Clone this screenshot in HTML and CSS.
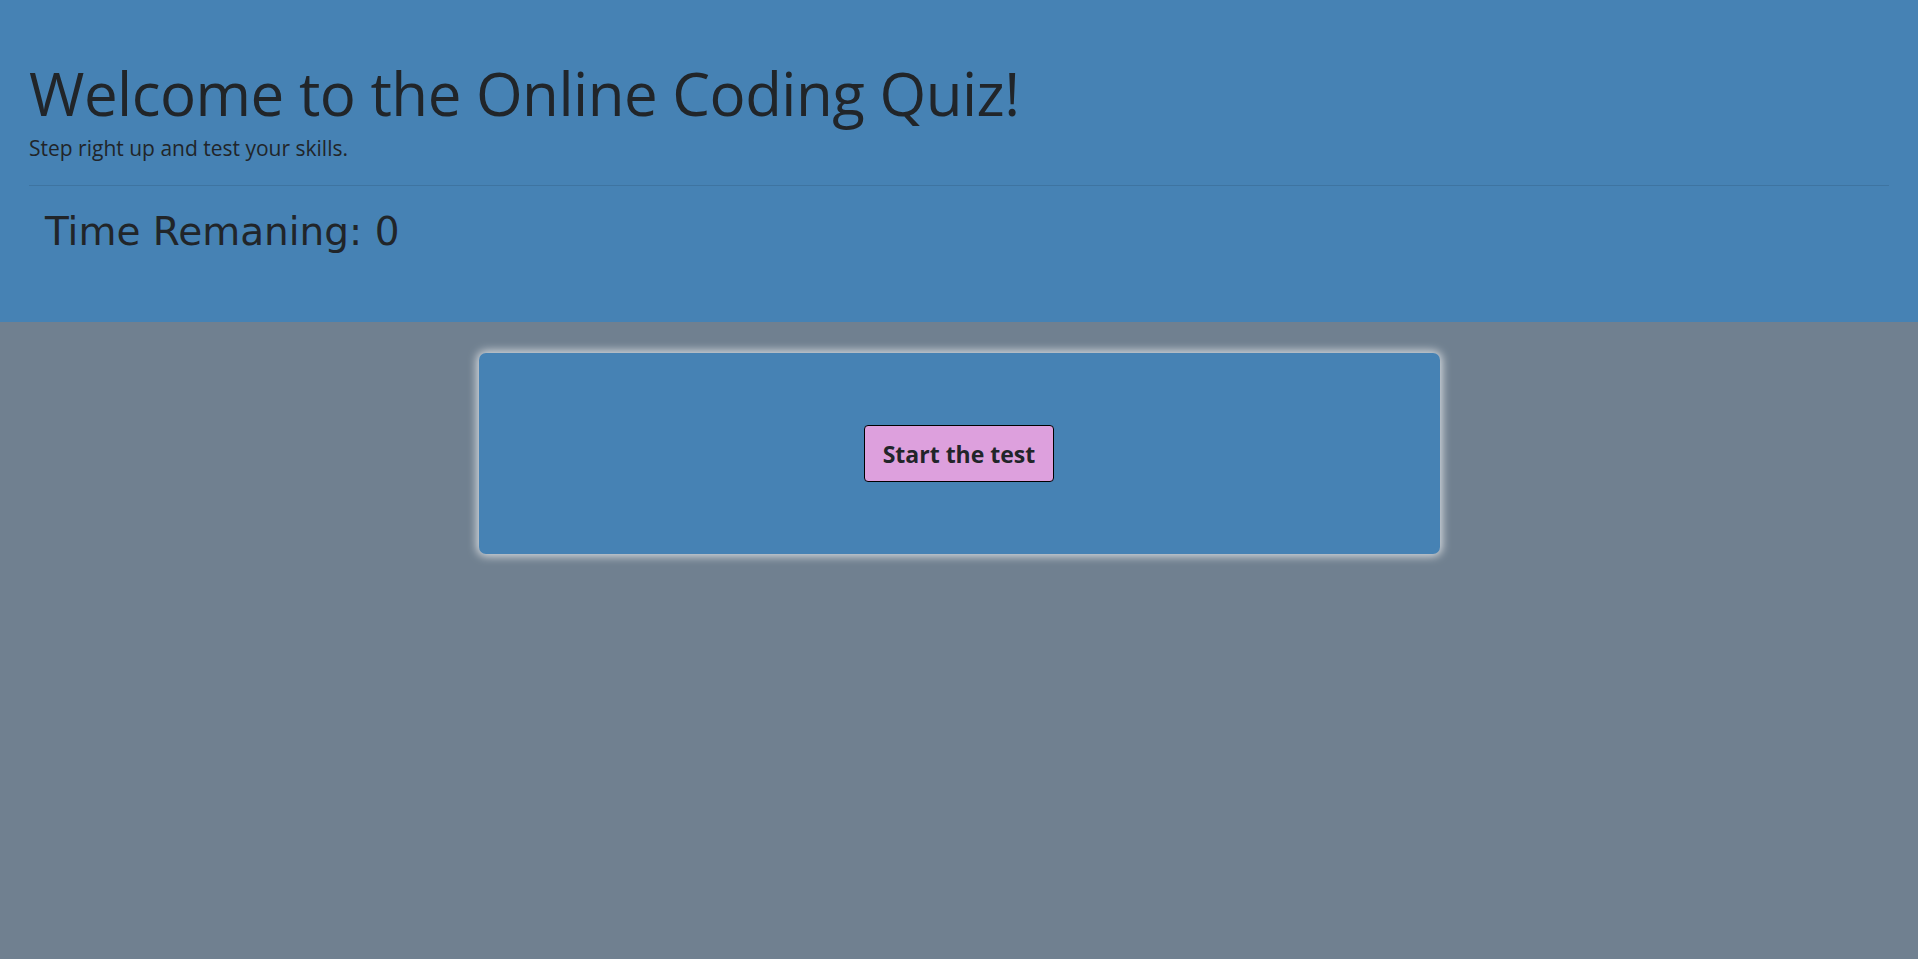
FILE: index.html
```html
<!DOCTYPE html>
<html>
<head>
<meta charset="utf-8">
<link rel="stylesheet" href="styles.css">
</head>
<body>
<header class="jumbo">
  <h1 class="title">Welcome to the Online Coding Quiz!</h1>
  <p class="lead">Step right up and test your skills.</p>
  <hr class="rule">
  <h2 class="timer">Time Remaning: 0</h2>
</header>
<main class="main">
  <section class="card">
    <button class="start">Start the test</button>
  </section>
</main>
</body>
</html>
```
FILE: styles.css
```css
html, body {
  margin: 0;
  padding: 0;
}
body {
  background: #708090;
  color: #212529;
  font-family: "Open Sans", "Noto Sans", sans-serif;
  min-height: 959px;
}
.jumbo {
  background: #4682b4;
  height: 322px;
  box-sizing: border-box;
  padding: 57px 29px 0 29px;
}
.title {
  margin: 0;
  font-size: 60px;
  font-weight: 400;
  line-height: 72px;
  letter-spacing: -0.5px;
}
.lead {
  margin: 4px 0 0 0;
  font-size: 21px;
  line-height: 30px;
  font-weight: 400;
}
.rule {
  margin: 22px 0 0 0;
  border: 0;
  border-top: 1px solid rgba(0,0,0,0.1);
}
.timer {
  margin: 22px 0 0 16px;
  font-family: "DejaVu Sans", sans-serif;
  font-size: 39px;
  font-weight: 400;
  line-height: 48px;
}
.main {
  display: flex;
  justify-content: center;
  padding-top: 31px;
}
.card {
  width: 961px;
  height: 201px;
  box-sizing: border-box;
  background: #4682b4;
  border-radius: 7px;
  box-shadow: 0 0 10px 2px rgba(255,255,255,0.75);
  display: flex;
  align-items: center;
  justify-content: center;
}
.start {
  width: 190px;
  height: 57px;
  background: #dda0dd;
  border: 1px solid #000;
  border-radius: 4px;
  color: #212529;
  font-family: "Open Sans", sans-serif;
  font-weight: 700;
  font-size: 23px;
  padding: 0;
}
```
